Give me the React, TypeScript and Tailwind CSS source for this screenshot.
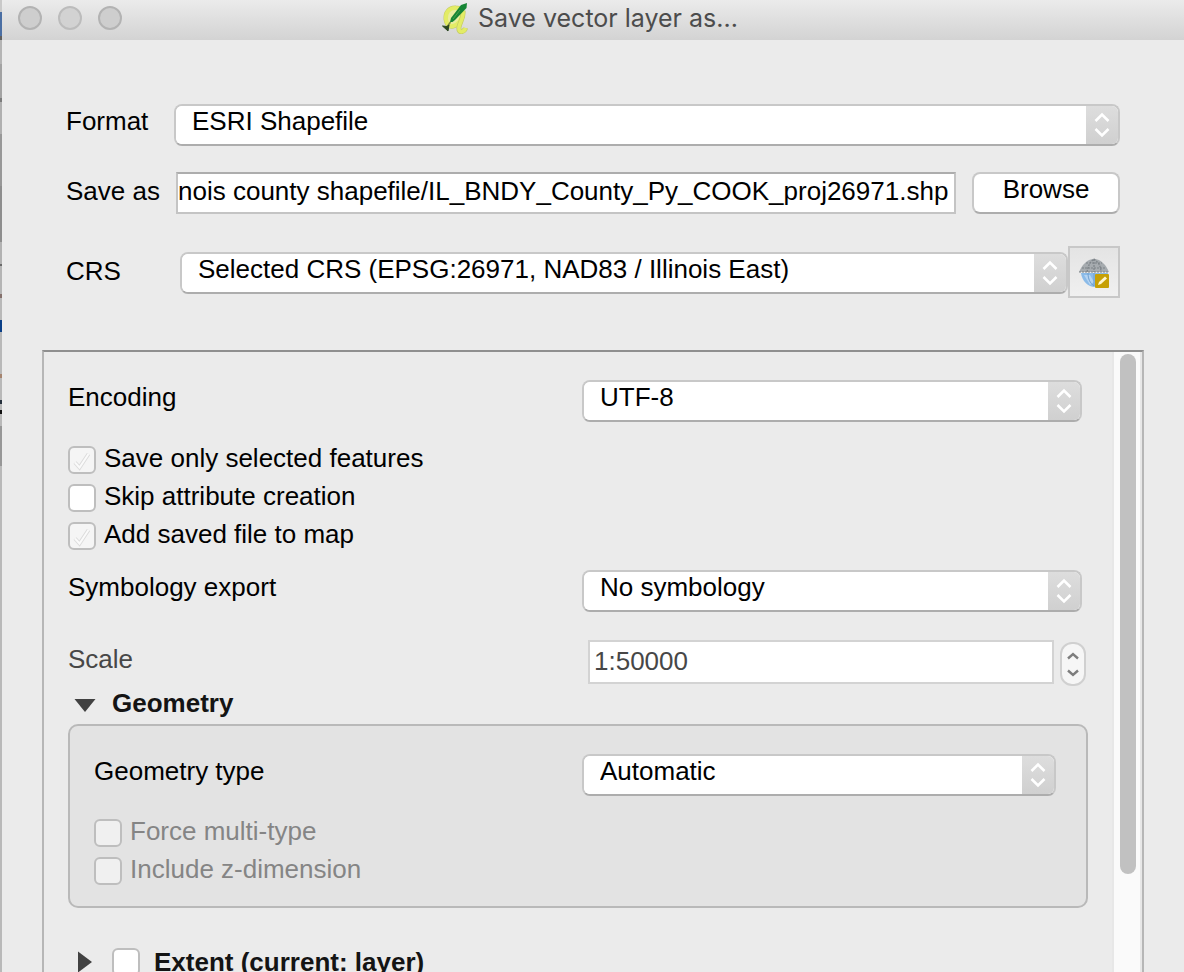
import type { ReactNode } from "react";

const EDGE = [
  "h-3 bg-[#c9c9c9]",
  "h-6 bg-[#4a6ea3]",
  "h-1 bg-[#5e5e5e]",
  "h-6 bg-[#b5b5b5]",
  "h-[34px] bg-[#a3a3a3]",
  "h-1 bg-[#7c7c7c]",
  "h-[32px] bg-[#b0b0b0]",
  "h-[52px] bg-[#989898]",
  "h-14 bg-[#8e8e8e]",
  "h-[22px] bg-[#b2b2b2]",
  "h-[2px] bg-[#696969]",
  "h-7 bg-[#b5b5b5]",
  "h-1 bg-[#84706c]",
  "h-[22px] bg-[#b9b9b9]",
  "h-3 bg-[#0a3f87]",
  "h-[42px] bg-[#b9b9b9]",
  "h-1 bg-[#a5846f]",
  "h-[22px] bg-[#b9b9b9]",
  "h-1 bg-[#26303c]",
  "h-[6px] bg-[#b9b9b9]",
  "h-1 bg-[#111111]",
  "h-3 bg-[#b9b9b9]",
  "h-10 bg-[#979797]",
];

function Caret() {
  return (
    <svg viewBox="0 0 16 26" className="h-[26px] w-4" fill="none" stroke="#fff" strokeWidth="2.6" aria-hidden="true">
      <path d="M1.5 9 L8 2.5 L14.5 9 M1.5 17 L8 23.5 L14.5 17" />
    </svg>
  );
}

function Combo({ id, value, className = "" }: { id: string; value: string; className?: string }) {
  return (
    <div
      className={`flex h-[42px] min-w-0 overflow-hidden rounded-lg border-2 border-[#c8c8c8] border-b-[#adadad] bg-white ${className}`}
    >
      <select id={id} className="min-w-0 flex-1 appearance-none bg-white pb-2 pl-4 leading-[30px] outline-none">
        <option>{value}</option>
      </select>
      <span className="pointer-events-none -my-0.5 flex w-8 shrink-0 items-center justify-center bg-linear-to-b from-[#dedede] to-[#cfcfcf]">
        <Caret />
      </span>
    </div>
  );
}

function Box({ id, checked = false, disabled = false }: { id: string; checked?: boolean; disabled?: boolean }) {
  const fill = checked ? "bg-[#f5f5f5]" : disabled ? "bg-[#f0f0f0]" : "bg-white";
  return (
    <span className="grid size-7 shrink-0">
      <input
        id={id}
        type="checkbox"
        defaultChecked={checked}
        disabled={disabled}
        className={`col-start-1 row-start-1 size-7 appearance-none rounded-md border-2 border-[#bebebe] ${fill}`}
      />
      {checked && (
        <svg viewBox="0 0 28 28" className="pointer-events-none col-start-1 row-start-1 size-7" fill="none" aria-hidden="true">
          <path d="M7 16.5 L11.5 21.5 L20.5 8" stroke="#dcdcdc" strokeWidth="4" />
          <path d="M7 16.5 L11.5 21.5 L20.5 8" stroke="#fafafa" strokeWidth="2" />
        </svg>
      )}
    </span>
  );
}

function Check({ id, children, checked, disabled }: { id: string; children: ReactNode; checked?: boolean; disabled?: boolean }) {
  return (
    <div className="flex h-[38px] items-center gap-2">
      <Box id={id} checked={checked} disabled={disabled} />
      <label htmlFor={id} className={`pb-1 ${disabled ? "text-[#858585]" : ""}`}>
        {children}
      </label>
    </div>
  );
}

function Logo() {
  return (
    <svg viewBox="0 0 26 32" className="h-8 w-[26px]" fill="none" aria-hidden="true">
      <path
        d="M14 6 C7 5.500 3.500 11 4 17 C4.500 22 7 25 11 24 C16 23 20 18 20.500 11 C20 8 18 6 14 6Z"
        stroke="#c5cc63"
        strokeWidth="5"
      />
      <path
        d="M14 6 C7 5.500 3.500 11 4 17 C4.500 22 7 25 11 24 C16 23 20 18 20.500 11 C20 8 18 6 14 6Z"
        stroke="#e3ec66"
        strokeWidth="4"
        fill="#e9eda0"
      />
      <path d="M21 9 C22 15 18 20 17 25 C16.500 29 18 30 20 29.500 C22 29 23 28 23.500 26" stroke="#c5cc63" strokeWidth="5" />
      <path d="M21 9 C22 15 18 20 17 25 C16.500 29 18 30 20 29.500 C22 29 23 28 23.500 26" stroke="#e3ec66" strokeWidth="3.600" />
      <path d="M25 1 L19 3 L9 16 L8 20 L10.500 20 L13 18 L24.500 6Z" fill="#168535" />
      <path d="M18 8 L11 17" stroke="#4ba04a" strokeWidth="1" />
      <path d="M8.500 20 L5 25" stroke="#7d8a3a" strokeWidth="1.500" />
      <path d="M0.500 24 L5 24.500 L7 23 L6 29Z" fill="#29451f" stroke="#29451f" strokeWidth="1" />
    </svg>
  );
}

function Globe() {
  return (
    <svg viewBox="0 0 32 32" className="size-8" fill="none" aria-hidden="true">
      <path d="M1 16 C4 9 9 3 16 3 C23 3 28 9 31 16Z" fill="#a6abaf" />
      <path d="M3 17 H30 C28 25 23 31 17 31 C10 31 4 25 3 17Z" fill="#8bbbe8" />
      <path d="M6 19 L12 19 L16 26 L12 29Z" fill="#b5d4f2" />
      <path
        d="M1 16 H31 M4 12 H28 M8 7 H24 M16 3 V16 M9 16 C10 10 12 6 16 3 C20 6 23 10 23 16"
        stroke="#7d8388"
        strokeWidth="1.200"
        strokeDasharray="2 1"
      />
      <path d="M10 17 C10 23 12 27 16 30 M16 17 V30" stroke="#6f9fce" strokeWidth="1" />
      <rect x="17" y="18" width="14" height="14" rx="1" fill="#c6a006" />
      <path d="M20 29 L21 26 L27 20.500 L29 22.500 L23 28Z" fill="#fff6d0" />
    </svg>
  );
}

export default function App() {
  return (
    <div className="flex h-screen overflow-hidden bg-[#ebebeb] font-['Liberation_Sans',Arial,sans-serif] text-[26px] leading-[30px] text-black">
      <div className="flex w-[2px] shrink-0 flex-col bg-[#b9b9b9]" aria-hidden="true">
        {EDGE.map((c, i) => (
          <span key={i} className={c} />
        ))}
      </div>
      <main className="flex min-w-0 flex-1 flex-col">
        <header className="grid h-10 shrink-0 grid-cols-[1fr_auto_1fr] items-center rounded-tl-lg bg-linear-to-b from-[#ebebeb] to-[#d3d3d3] pb-1">
          <div className="flex gap-4 pl-4">
            <button aria-label="Close" className="size-6 rounded-full border-2 border-[#b3b3b3] bg-[#cecece]" />
            <button aria-label="Minimize" className="size-6 rounded-full border-2 border-[#bcbcbc] bg-[#d2d2d2]" />
            <button aria-label="Zoom" className="size-6 rounded-full border-2 border-[#b3b3b3] bg-[#cecece]" />
          </div>
          <div className="flex items-center gap-2.5 pr-1.5">
            <Logo />
            <h1 className="font-['Inter',sans-serif] text-[25px] text-[#4c4c4c]">Save vector layer as...</h1>
          </div>
        </header>

        <form className="flex min-h-0 flex-1 flex-col pt-16">
          <div className="flex h-[42px] shrink-0 items-center px-16">
            <label htmlFor="format" className="w-[108px] shrink-0 pb-2">
              Format
            </label>
            <Combo id="format" value="ESRI Shapefile" className="flex-1" />
          </div>
          <div className="mt-[26px] flex h-[42px] shrink-0 items-center px-16">
            <label htmlFor="path" className="w-[110px] shrink-0 pb-1">
              Save as
            </label>
            <input
              id="path"
              defaultValue="nois county shapefile/IL_BNDY_County_Py_COOK_proj26971.shp"
              className="h-[42px] min-w-0 flex-1 border-2 border-[#c4c4c4] border-t-[#adadad] bg-white pb-1 outline-none"
            />
            <button
              type="button"
              className="ml-4 h-[42px] w-[148px] rounded-lg border-2 border-[#c8c8c8] border-b-[#adadad] bg-white pb-2"
            >
              Browse
            </button>
          </div>
          <div className="mt-8 flex h-[52px] shrink-0 items-center px-16">
            <label htmlFor="crs" className="w-[114px] shrink-0 pb-0.5">
              CRS
            </label>
            <Combo id="crs" value="Selected CRS (EPSG:26971, NAD83 / Illinois East)" className="mt-0.5 flex-1" />
            <button
              type="button"
              aria-label="Select CRS"
              className="flex size-[52px] items-center justify-center border-2 border-[#c8c8c8] bg-linear-to-b from-[#e4e4e4] to-[#f0f0f0]"
            >
              <Globe />
            </button>
          </div>

          <section className="mx-10 mt-[52px] flex min-h-0 flex-1 border-x-2 border-t-2 border-x-[#b6b6b6] border-t-[#8f8f8f]">
            <div className="min-w-0 flex-1 overflow-hidden px-6 pt-7">
              <div className="grid grid-cols-[514px_1fr] items-center pr-1.5">
                <label htmlFor="encoding" className="pb-2">
                  Encoding
                </label>
                <Combo id="encoding" value="UTF-8" />
              </div>
              <div className="mt-[19px]">
                <Check id="selected" checked>
                  Save only selected features
                </Check>
                <Check id="skip">Skip attribute creation</Check>
                <Check id="add" checked>
                  Add saved file to map
                </Check>
              </div>
              <div className="mt-[15px] grid grid-cols-[514px_1fr] items-center pr-1.5">
                <label htmlFor="symbology" className="pb-2">
                  Symbology export
                </label>
                <Combo id="symbology" value="No symbology" />
              </div>
              <div className="mt-7 flex h-[46px] items-center">
                <label htmlFor="scale" className="w-[520px] shrink-0 pb-2 text-[#474747]">
                  Scale
                </label>
                <input
                  id="scale"
                  defaultValue="1:50000"
                  className="mb-0.5 h-11 min-w-0 flex-1 border-2 border-[#d3d3d3] bg-white pb-0.5 pl-1 text-[#474747] outline-none"
                />
                <button
                  type="button"
                  aria-label="Change scale"
                  className="mt-0.5 mr-0.5 ml-1.5 flex h-11 w-[26px] items-center justify-center rounded-xl border-2 border-[#d0d0d0] bg-[#f6f6f6]"
                >
                  <svg viewBox="0 0 14 28" className="h-7 w-3.5" fill="none" stroke="#7d7d7d" strokeWidth="2.400" aria-hidden="true">
                    <path d="M2 8.500 L7 4 L12 8.500 M2 20.500 L7 25 L12 20.500" />
                  </svg>
                </button>
              </div>
              <div className="flex h-[38px] items-center gap-4 pl-1.5">
                <svg viewBox="0 0 22 14" className="h-3.5 w-[22px]" aria-hidden="true">
                  <path d="M0.500 1 H21.500 L11 14Z" fill="#414141" />
                </svg>
                <h2 className="pb-1 font-bold text-[#141414]">Geometry</h2>
              </div>
              <div className="rounded-[10px] border-2 border-[#b9b9b9] bg-[#e3e3e3] px-6 pt-7 pb-4">
                <div className="grid grid-cols-[488px_1fr] items-center pr-1.5">
                  <label htmlFor="geometry" className="pb-2">
                    Geometry type
                  </label>
                  <Combo id="geometry" value="Automatic" />
                </div>
                <div className="mt-[18px]">
                  <Check id="multi" disabled>
                    Force multi-type
                  </Check>
                  <Check id="z" disabled>
                    Include z-dimension
                  </Check>
                </div>
              </div>
              <div className="mt-[35px] flex h-[38px] items-center pl-2">
                <svg viewBox="0 0 16 22" className="mr-5 h-[22px] w-4" aria-hidden="true">
                  <path d="M2 0.500 V21.500 L16 11Z" fill="#414141" />
                </svg>
                <Box id="extent" />
                <label htmlFor="extent" className="ml-3.5 font-bold text-[#141414]">
                  Extent (current: layer)
                </label>
              </div>
            </div>
            <div className="w-[30px] shrink-0 border-x-2 border-x-[#e7e7e7] bg-[#fafafa] px-1.5 pt-0.5">
              <div className="h-[520px] w-4 rounded-full bg-[#c1c1c1]" />
            </div>
          </section>
        </form>
      </main>
    </div>
  );
}
